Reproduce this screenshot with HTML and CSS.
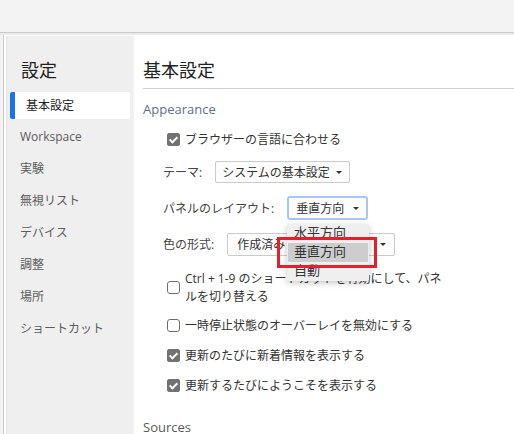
FILE: index.html
```html
<!DOCTYPE html>
<html lang="ja">
<head>
<meta charset="utf-8">
<title>設定</title>
<link rel="stylesheet" href="styles.css">
</head>
<body>
<div class="app">
  <div class="topbar"></div>
  <div class="shade"></div>
  <div class="content">
    <div class="strip"></div>
    <aside class="sidebar">
      <div class="side-title">設定</div>
      <nav class="nav">
        <div class="nav-item active">基本設定</div>
        <div class="nav-item">Workspace</div>
        <div class="nav-item">実験</div>
        <div class="nav-item">無視リスト</div>
        <div class="nav-item">デバイス</div>
        <div class="nav-item">調整</div>
        <div class="nav-item">場所</div>
        <div class="nav-item">ショートカット</div>
      </nav>
    </aside>
    <main class="main">
      <h1 class="page-title">基本設定</h1>
      <div class="section-title">Appearance</div>
      <div class="row check-row first">
        <span class="cb checked"></span><span>ブラウザーの言語に合わせる</span>
      </div>
      <div class="row field-row">
        <span class="label">テーマ:</span>
        <div class="select theme"><span>システムの基本設定</span><i class="arrow"></i></div>
      </div>
      <div class="row field-row">
        <span class="label">パネルのレイアウト:</span>
        <div class="select panel focused"><span>垂直方向</span><i class="arrow"></i></div>
      </div>
      <div class="row field-row">
        <span class="label">色の形式:</span>
        <div class="select color"><span>作成済み</span><i class="arrow"></i></div>
      </div>
      <div class="row check-row multi">
        <span class="cb"></span><span class="multi-text">Ctrl + 1-9 のショートカットを有効にして、パネ<br>ルを切り替える</span>
      </div>
      <div class="row check-row">
        <span class="cb"></span><span>一時停止状態のオーバーレイを無効にする</span>
      </div>
      <div class="row check-row">
        <span class="cb checked"></span><span>更新のたびに新着情報を表示する</span>
      </div>
      <div class="row check-row">
        <span class="cb checked"></span><span>更新するたびにようこそを表示する</span>
      </div>
      <div class="section-title sources">Sources</div>

      <div class="popup">
        <div class="opt">水平方向</div>
        <div class="opt hl">垂直方向</div>
        <div class="opt">自動</div>
      </div>
      <div class="redbox"></div>
    </main>
  </div>
</div>
</body>
</html>
```

FILE: styles.css
```css
* { box-sizing: border-box; }
html, body { margin: 0; padding: 0; }
body {
  width: 514px;
  height: 434px;
  overflow: hidden;
  background: #ffffff;
  font-family: "Open Sans", "Noto Sans CJK JP", sans-serif;
  font-size: 12px;
  color: #333333;
}
.app {
  display: flex;
  flex-direction: column;
  height: 434px;
}
.topbar {
  height: 33px;
  background: #f3f3f3;
  border-bottom: 1px solid #c9c9c9;
  flex: none;
}
.shade {
  height: 2px;
  background: #ebebeb;
  flex: none;
}
.content {
  flex: 1;
  display: flex;
  min-height: 0;
}
.strip {
  width: 4px;
  background: #f3f3f3;
  border-right: 1px solid #c9c9c9;
  flex: none;
}
.sidebar {
  width: 127px;
  margin-left: 2px;
  margin-top: 1px;
  background: #efefef;
  flex: none;
  box-shadow: 1px 0 2px rgba(0,0,0,0.06);
  border-left: 1px solid #e2e2e2;
}
.side-title {
  font-size: 18px;
  line-height: 24px;
  color: #222;
  padding: 22px 0 0 14px;
  height: 54px;
}
.nav {
  display: flex;
  flex-direction: column;
}
.nav-item {
  height: 32px;
  line-height: 32px;
  padding-left: 13px;
  color: #5c5c5c;
  font-size: 12px;
}
.nav-item.active {
  height: 27px;
  line-height: 27px;
  margin: 2px 3px 2px 3px;
  background: #ffffff;
  border-left: 5px solid #1a73e8;
  border-radius: 2px;
  padding-left: 11px;
  color: #222;
}
.main {
  flex: 1;
  position: relative;
  padding-left: 10px;
  padding-top: 23px;
}
.page-title {
  margin: 0;
  font-size: 18px;
  font-weight: normal;
  line-height: 24px;
  color: #222;
  padding-bottom: 6px;
  border-bottom: 1px solid #cfcfcf;
}
.section-title {
  margin-top: 11px;
  line-height: 18px;
  font-size: 13px;
  color: #5d6f8c;
}
.section-title.sources {
  margin-top: 18px;
  color: #5a5a5a;
}
.row {
  display: flex;
  align-items: center;
  padding-left: 24px;
}
.check-row {
  height: 30px;
  gap: 5px;
}
.check-row.first { margin-top: 6px; }
.field-row {
  height: 36px;
  padding-left: 20px;
  gap: 13px;
}
.check-row.multi {
  height: 48px;
  padding-top: 3px;
}
.multi-text { line-height: 18px; }
.label { color: #444; }
.cb {
  width: 13px;
  height: 13px;
  border: 1px solid #6d6d6d;
  border-radius: 3px;
  background: #fff;
  flex: none;
  position: relative;
}
.cb.checked {
  background: #727272;
  border-color: #727272;
  border-radius: 2px;
}
.cb.checked::after {
  content: "";
  position: absolute;
  left: 3px;
  top: 1px;
  width: 3px;
  height: 6px;
  border: solid #fff;
  border-width: 0 2px 2px 0;
  transform: rotate(45deg);
}
.select {
  display: flex;
  align-items: center;
  justify-content: space-between;
  border: 1px solid #cbcbcb;
  border-radius: 2px;
  background: #fcfcfc;
  color: #333;
  flex: none;
}
.select.theme { width: 135px; height: 22px; padding: 0 7px 0 6px; }
.select.panel { width: 81px; height: 24px; padding: 0 7px 0 7px; }
.select.color { width: 168px; height: 23px; padding: 0 8px 0 9px; }
.select.focused {
  border: 2px solid #a9c5f2;
  border-radius: 3px;
}
.arrow {
  width: 0;
  height: 0;
  border-left: 3px solid transparent;
  border-right: 3px solid transparent;
  border-top: 3px solid #333;
}
.popup {
  position: absolute;
  left: 154px;
  top: 189px;
  width: 82px;
  padding: 0 1px;
  background: #efefef;
  box-shadow: 0 2px 6px rgba(0,0,0,0.22);
  border-radius: 2px;
}
.opt {
  height: 19px;
  line-height: 17px;
  padding-left: 6px;
  color: #333;
  font-size: 13px;
}
.opt.hl { background: #cdcdcd; }
.redbox {
  position: absolute;
  left: 144px;
  top: 202px;
  width: 100px;
  height: 31px;
  border: 3px solid #e3202b;
}
```
